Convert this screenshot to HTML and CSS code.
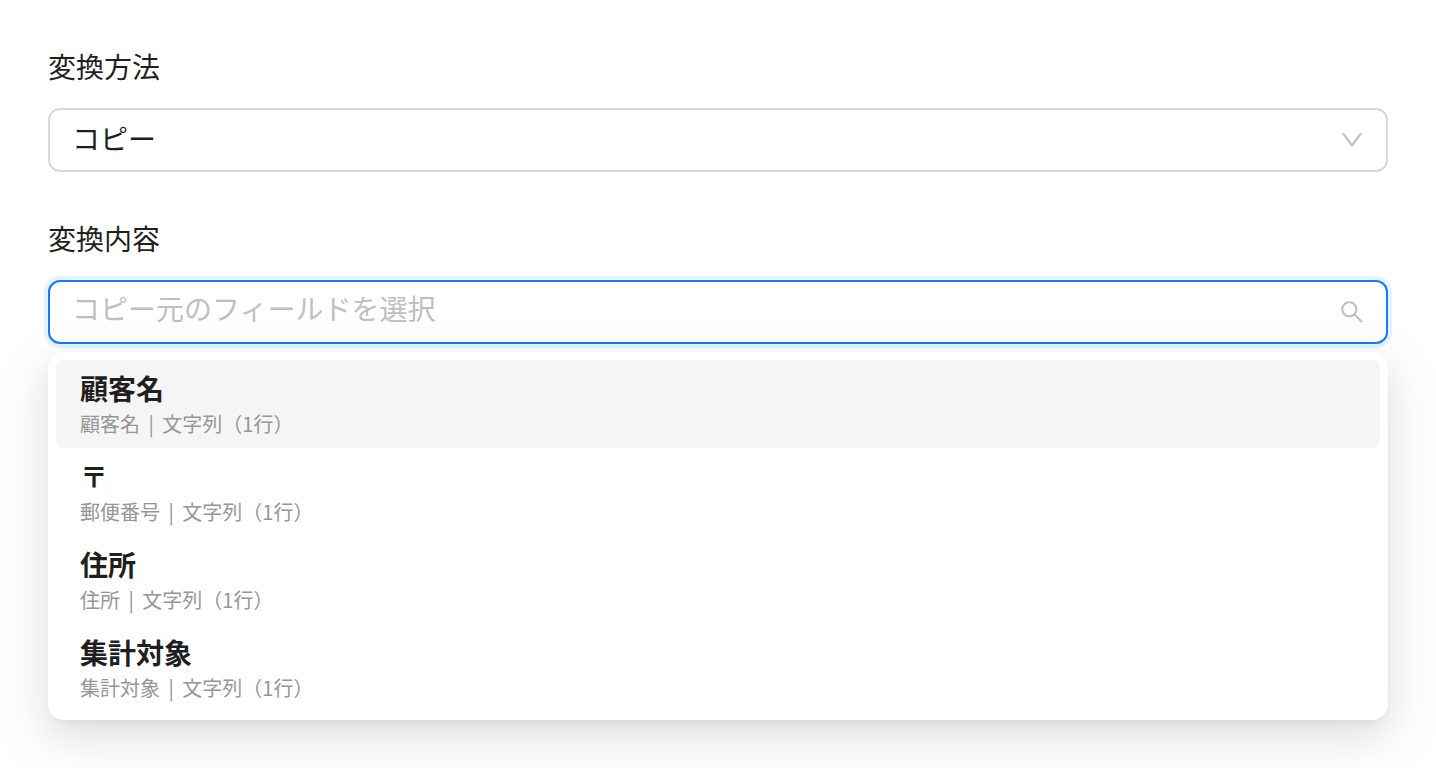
FILE: index.html
```html
<!DOCTYPE html>
<html lang="ja">
<head>
    <meta charset="UTF-8">
    <meta name="viewport" content="width=device-width, initial-scale=1.0">
    <title>変換</title>
    <link rel="stylesheet" href="styles.css">
</head>
<body>
    <div class="wrapper">
        <div class="field">
            <label class="field__label">変換方法</label>
            <div class="select">
                <span class="select__value">コピー</span>
                <svg class="select__icon" viewBox="64 64 896 896" fill="currentColor"><path d="M884 256h-75c-5.1 0-9.9 2.5-12.9 6.6L512 654.2 227.9 262.6c-3-4.1-7.8-6.6-12.9-6.6h-75c-6.5 0-10.3 7.4-6.5 12.7l352.6 486.1c12.8 17.6 39 17.6 51.7 0l352.6-486.1c3.9-5.3.1-12.7-6.4-12.7z"/></svg>
            </div>
        </div>
        <div class="field">
            <label class="field__label">変換内容</label>
            <div class="combo">
                <div class="select select--focused">
                    <input class="select__input" type="text" placeholder="コピー元のフィールドを選択">
                    <svg class="select__icon" viewBox="64 64 896 896" fill="currentColor"><path d="M909.6 854.5L649.9 594.8C690.2 542.7 712 479 712 412c0-80.2-31.3-155.4-87.9-212.1-56.6-56.7-132-87.9-212.1-87.9s-155.5 31.3-212.1 87.9C143.2 256.5 112 331.8 112 412c0 80.1 31.3 155.5 87.9 212.1C256.5 680.8 331.8 712 412 712c67 0 130.6-21.8 182.7-62l259.7 259.6a8.2 8.2 0 0 0 11.6 0l43.6-43.5a8.2 8.2 0 0 0 0-11.6zM570.4 570.4C528 612.7 471.8 636 412 636s-116-23.3-158.4-65.6C211.3 528 188 471.8 188 412s23.3-116.1 65.6-158.4C296 211.3 352.2 188 412 188s116.1 23.2 158.4 65.6S636 352.2 636 412s-23.3 116.1-65.6 158.4z"/></svg>
                </div>
                <div class="dropdown">
                    <div class="option option--active">
                        <p class="option__title">顧客名</p>
                        <p class="option__sub">顧客名 | 文字列（1行）</p>
                    </div>
                    <div class="option">
                        <p class="option__title">〒</p>
                        <p class="option__sub">郵便番号 | 文字列（1行）</p>
                    </div>
                    <div class="option">
                        <p class="option__title">住所</p>
                        <p class="option__sub">住所 | 文字列（1行）</p>
                    </div>
                    <div class="option">
                        <p class="option__title">集計対象</p>
                        <p class="option__sub">集計対象 | 文字列（1行）</p>
                    </div>
                </div>
            </div>
        </div>
    </div>
</body>
</html>
```

FILE: styles.css
```css
* {
    box-sizing: border-box;
}

html, body {
    margin: 0;
    height: 100%;
    overflow: hidden;
}

body {
    background: #fff;
    color: #1f1f1f;
    font-family: "Noto Sans CJK JP", "Liberation Sans", sans-serif;
}

.wrapper {
    padding: 48px;
}

.field {
    margin-bottom: 48px;
}

.field__label {
    display: block;
    font-size: 28px;
    line-height: 36px;
    margin-bottom: 24px;
}

.combo {
    position: relative;
}

.select {
    display: flex;
    align-items: center;
    justify-content: space-between;
    height: 64px;
    padding: 0 22px;
    background: #fff;
    border: 2px solid #d9d9d9;
    border-radius: 12px;
}

.select--focused {
    border-color: #1677ff;
    box-shadow: 0 0 0 4px rgba(5, 145, 255, 0.1);
}

.select__value {
    padding-bottom: 4px;
    font-size: 28px;
}

.select__input {
    flex: 1;
    min-width: 0;
    padding: 0 0 8px;
    border: none;
    outline: none;
    background: transparent;
    color: #1f1f1f;
    font: inherit;
    font-size: 28px;
}

.select__input::placeholder {
    color: #bfbfbf;
    opacity: 1;
}

.select__icon {
    flex: none;
    width: 24px;
    height: 24px;
    color: #bfbfbf;
}

.dropdown {
    position: absolute;
    top: 72px;
    left: 0;
    right: 0;
    padding: 8px;
    background: #fff;
    border-radius: 16px;
    box-shadow: 0 12px 32px 0 rgba(0, 0, 0, 0.08), 0 6px 12px -8px rgba(0, 0, 0, 0.12), 0 18px 56px 16px rgba(0, 0, 0, 0.05);
}

.option {
    height: 88px;
    padding: 8px 24px;
    border-radius: 8px;
}

.option--active {
    background: #f5f5f5;
}

.option__title {
    margin: 0 0 2px;
    font-size: 28px;
    font-weight: 700;
    line-height: 40px;
}

.option__sub {
    margin: 0;
    color: #969696;
    font-size: 20px;
    line-height: 28px;
    word-spacing: 4px;
}
```
